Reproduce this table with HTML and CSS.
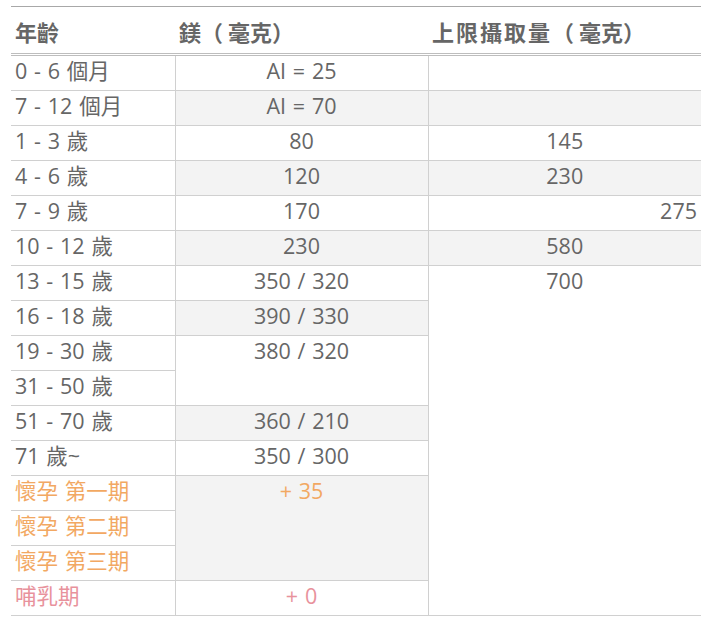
FILE: index.html
```html
<!DOCTYPE html>
<html lang="zh-Hant">
<head>
<meta charset="utf-8">
<title>鎂 攝取量</title>
<link rel="stylesheet" href="styles.css">
</head>
<body>
<table class="intake">
  <colgroup>
    <col class="c-age">
    <col class="c-mg">
    <col class="c-ul">
  </colgroup>
  <thead>
    <tr>
      <th>年齡</th>
      <th>鎂<span class="po">（</span>毫克）</th>
      <th><span class="wide">上限攝取量</span><span class="po">（</span>毫克）</th>
    </tr>
  </thead>
  <tbody>
    <tr><td class="age">0 - 6 個月</td><td class="val">AI = 25</td><td class="val"></td></tr>
    <tr><td class="age">7 - 12 個月</td><td class="val alt">AI = 70</td><td class="val alt"></td></tr>
    <tr><td class="age">1 - 3 歲</td><td class="val">80</td><td class="val">145</td></tr>
    <tr><td class="age">4 - 6 歲</td><td class="val alt">120</td><td class="val alt">230</td></tr>
    <tr><td class="age">7 - 9 歲</td><td class="val">170</td><td class="val right">275</td></tr>
    <tr><td class="age">10 - 12 歲</td><td class="val alt">230</td><td class="val alt">580</td></tr>
    <tr><td class="age">13 - 15 歲</td><td class="val">350 / 320</td><td class="val" rowspan="10">700</td></tr>
    <tr><td class="age">16 - 18 歲</td><td class="val alt">390 / 330</td></tr>
    <tr><td class="age">19 - 30 歲</td><td class="val" rowspan="2">380 / 320</td></tr>
    <tr><td class="age">31 - 50 歲</td></tr>
    <tr><td class="age">51 - 70 歲</td><td class="val alt">360 / 210</td></tr>
    <tr><td class="age">71 歲~</td><td class="val">350 / 300</td></tr>
    <tr><td class="age preg">懷孕 第一期</td><td class="val alt preg" rowspan="3">+ 35</td></tr>
    <tr><td class="age preg">懷孕 第二期</td></tr>
    <tr><td class="age preg">懷孕 第三期</td></tr>
    <tr><td class="age lact">哺乳期</td><td class="val lact">+ 0</td></tr>
  </tbody>
</table>
</body>
</html>
```

FILE: styles.css
```css
html, body {
  background: #ffffff;
}

body {
  margin: 6px 0 0 11px;
  font-family: "Open Sans", "Noto Sans CJK TC", sans-serif;
  font-size: 21.5px;
  color: #666666;
}

.intake {
  width: 690px;
  border-collapse: collapse;
  table-layout: fixed;
}

.c-age { width: 164px; }
.c-mg { width: 253px; }
.c-ul { width: 273px; }

.intake th {
  text-align: left;
  font-size: 22px;
  font-weight: bold;
  color: #666666;
  padding: 10px 4px 6px;
  line-height: 30px;
  white-space: nowrap;
  border-top: 1px solid #a8a8a8;
  border-bottom: 3px double #bdbdbd;
}

.intake th .po {
  margin-right: 5px;
}

.intake th .wide {
  letter-spacing: 2px;
}

.intake td {
  padding: 1px 4px 5px;
  line-height: 28px;
  word-spacing: 1.2px;
  vertical-align: top;
  border-bottom: 1px solid #d0d0d0;
}

.intake td.val {
  text-align: center;
  border-left: 1px solid #d0d0d0;
}

.intake td.right {
  text-align: right;
}

.intake td.alt {
  background: #f3f3f3;
}

.preg {
  color: #f2a862;
}

.lact {
  color: #e8929c;
}
```
